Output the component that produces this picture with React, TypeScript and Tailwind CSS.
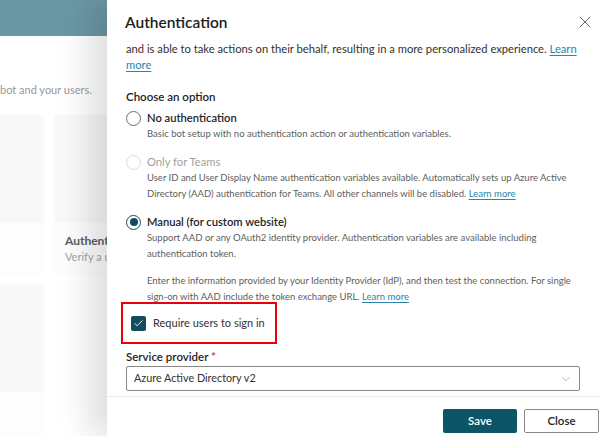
import { ChevronDown, X, Check } from "lucide-react"

type Option = {
    label: string
    desc: React.ReactNode
    disabled?: boolean
    selected?: boolean
}

const LINK = "text-[#2a85a8] underline underline-offset-2"

const OPTIONS: Option[] = [
    {
        label: "No authentication",
        desc: "Basic bot setup with no authentication action or authentication variables.",
    },
    {
        label: "Only for Teams",
        disabled: true,
        desc: (
            <>
                User ID and User Display Name authentication variables available. Automatically sets up Azure Active
                <br />
                Directory (AAD) authentication for Teams. All other channels will be disabled.{" "}
                <a className={LINK}>Learn more</a>
            </>
        ),
    },
    {
        label: "Manual (for custom website)",
        selected: true,
        desc: (
            <>
                Support AAD or any OAuth2 identity provider. Authentication variables are available including
                <br />
                authentication token.
            </>
        ),
    },
]

function Radio({ disabled, selected }: { disabled?: boolean; selected?: boolean }) {
    return (
        <span
            className={
                "flex h-[15px] w-[15px] shrink-0 items-center justify-center rounded-full border " +
                (disabled ? "border-[#dcdcdc]" : selected ? "border-[#0f4c5f]" : "border-[#6b6b6b]")
            }
        >
            {selected && <span className="h-[8px] w-[8px] rounded-full bg-[#0f4c5f]" />}
        </span>
    )
}

function Background() {
    return (
        <div className="flex w-[140px] flex-col">
            <div className="h-[36px] shrink-0 bg-[#6a98a4]" />
            <p className="mt-[46px] shrink-0 whitespace-nowrap text-[11px] leading-[16px] text-[#9a9896]">
                bot and your users.
            </p>
            <div className="mt-[17px] flex shrink-0 gap-[12px]">
                <div className="flex flex-col gap-[12px]">
                    <div className="flex h-[158px] w-[43px] flex-col rounded-r-[4px] bg-[#f8f8f8] shadow-[0_0_3px_rgba(0,0,0,0.04)]">
                        <div className="h-[108px]" />
                        <div className="flex-1 bg-[#fdfdfd]" />
                    </div>
                    <div className="flex h-[160px] w-[43px] flex-col rounded-r-[4px] bg-[#f8f8f8] shadow-[0_0_3px_rgba(0,0,0,0.04)]">
                        <div className="h-[107px]" />
                        <div className="flex-1 bg-[#fdfdfd]" />
                    </div>
                </div>
                <div className="flex h-[158px] w-[80px] flex-col rounded-[4px] bg-[#f8f8f8] shadow-[0_0_3px_rgba(0,0,0,0.05)]">
                    <div className="h-[108px]" />
                    <div className="flex-1 bg-[#fdfdfd] px-[10px] pt-[10px]">
                        <p className="text-[12px] font-bold leading-[16px] text-[#5c5c5c]">Authentication</p>
                        <p className="whitespace-nowrap text-[11px] leading-[16px] text-[#a3a3a3]">Verify a user</p>
                    </div>
                </div>
            </div>
        </div>
    )
}

export default function App() {
    return (
        <div className="flex h-[436px] w-[600px] overflow-hidden bg-white font-['Lato',sans-serif] text-[#242424]">
            <div className="relative w-[107px] shrink-0 overflow-hidden">
                <Background />
            </div>

            <div className="z-10 flex h-full min-w-0 flex-1 flex-col bg-white shadow-[-18px_0_30px_rgba(0,0,0,0.13)]">
                <div className="flex shrink-0 items-center justify-between pl-[18px] pr-[5px] pt-[10px]">
                    <h1 className="text-[15.5px] font-semibold leading-[24px] text-[#201f1e]">Authentication</h1>
                    <X className="h-[20px] w-[20px] text-[#444]" strokeWidth={1} />
                </div>

                <div className="min-w-0 flex-1 overflow-hidden pl-[19px] pr-[20px] pt-[7px]">
                    <p className="text-[11.2px] leading-[16px] text-[#323130]">
                        and is able to take actions on their behalf, resulting in a more personalized experience.{" "}
                        <a className={LINK}>
                            Learn
                            <br />
                            more
                        </a>
                    </p>

                    <p className="mt-[16px] text-[11.5px] font-semibold leading-[16px]">Choose an option</p>

                    <div className="mt-[5px] flex flex-col gap-[12px]">
                        {OPTIONS.map((opt) => (
                            <div key={opt.label}>
                                <div className="flex items-center gap-[6px]">
                                    <Radio disabled={opt.disabled} selected={opt.selected} />
                                    <span
                                        className={
                                            "text-[11.2px] leading-[16px] " +
                                            (opt.disabled ? "text-[#a19f9d]" : "font-semibold text-[#242424]")
                                        }
                                    >
                                        {opt.label}
                                    </span>
                                </div>
                                <p className="whitespace-nowrap pl-[21px] text-[9.5px] leading-[16px] text-[#605e5c]">
                                    {opt.desc}
                                </p>
                            </div>
                        ))}
                    </div>

                    <p className="mt-[11px] whitespace-nowrap pl-[21px] text-[9.5px] leading-[16px] text-[#605e5c]">
                        Enter the information provided by your Identity Provider (IdP), and then test the connection. For single
                        <br />
                        sign-on with AAD include the token exchange URL. <a className={LINK}>Learn more</a>
                    </p>

                    <div className="-ml-[5px] mt-[-3px] flex h-[42px] w-[156px] items-center gap-[7px] border-2 border-[#e8000b] pl-[8px]">
                        <span className="flex h-[15px] w-[15px] shrink-0 items-center justify-center rounded-[2px] bg-[#134c5f]">
                            <Check className="h-[11px] w-[11px] text-white" strokeWidth={2} />
                        </span>
                        <span className="whitespace-nowrap text-[11px] text-[#323130]">Require users to sign in</span>
                    </div>

                    <p className="mt-[5px] text-[11.5px] font-semibold leading-[16px]">
                        Service provider <span className="text-[#c4314b]">*</span>
                    </p>
                    <div className="mt-[1px] flex h-[25px] items-center justify-between rounded-[2px] border border-[#8a8886] pl-[7px] pr-[6px]">
                        <span className="text-[10.8px] text-[#323130]">Azure Active Directory v2</span>
                        <ChevronDown className="h-[14px] w-[14px] text-[#8a8886]" strokeWidth={1} />
                    </div>
                </div>

                <div className="flex h-[40px] shrink-0 items-start justify-end gap-[7px] border-t border-[#ececec] pr-[1px] pt-[12px]">
                    <button className="h-[24px] w-[74px] rounded-[2px] bg-[#0b5567] text-[11.5px] font-semibold text-white">
                        Save
                    </button>
                    <button className="h-[24px] w-[75px] rounded-[2px] border border-[#8a8886] bg-white text-[11.5px] font-semibold text-[#242424]">
                        Close
                    </button>
                </div>
            </div>
        </div>
    )
}
